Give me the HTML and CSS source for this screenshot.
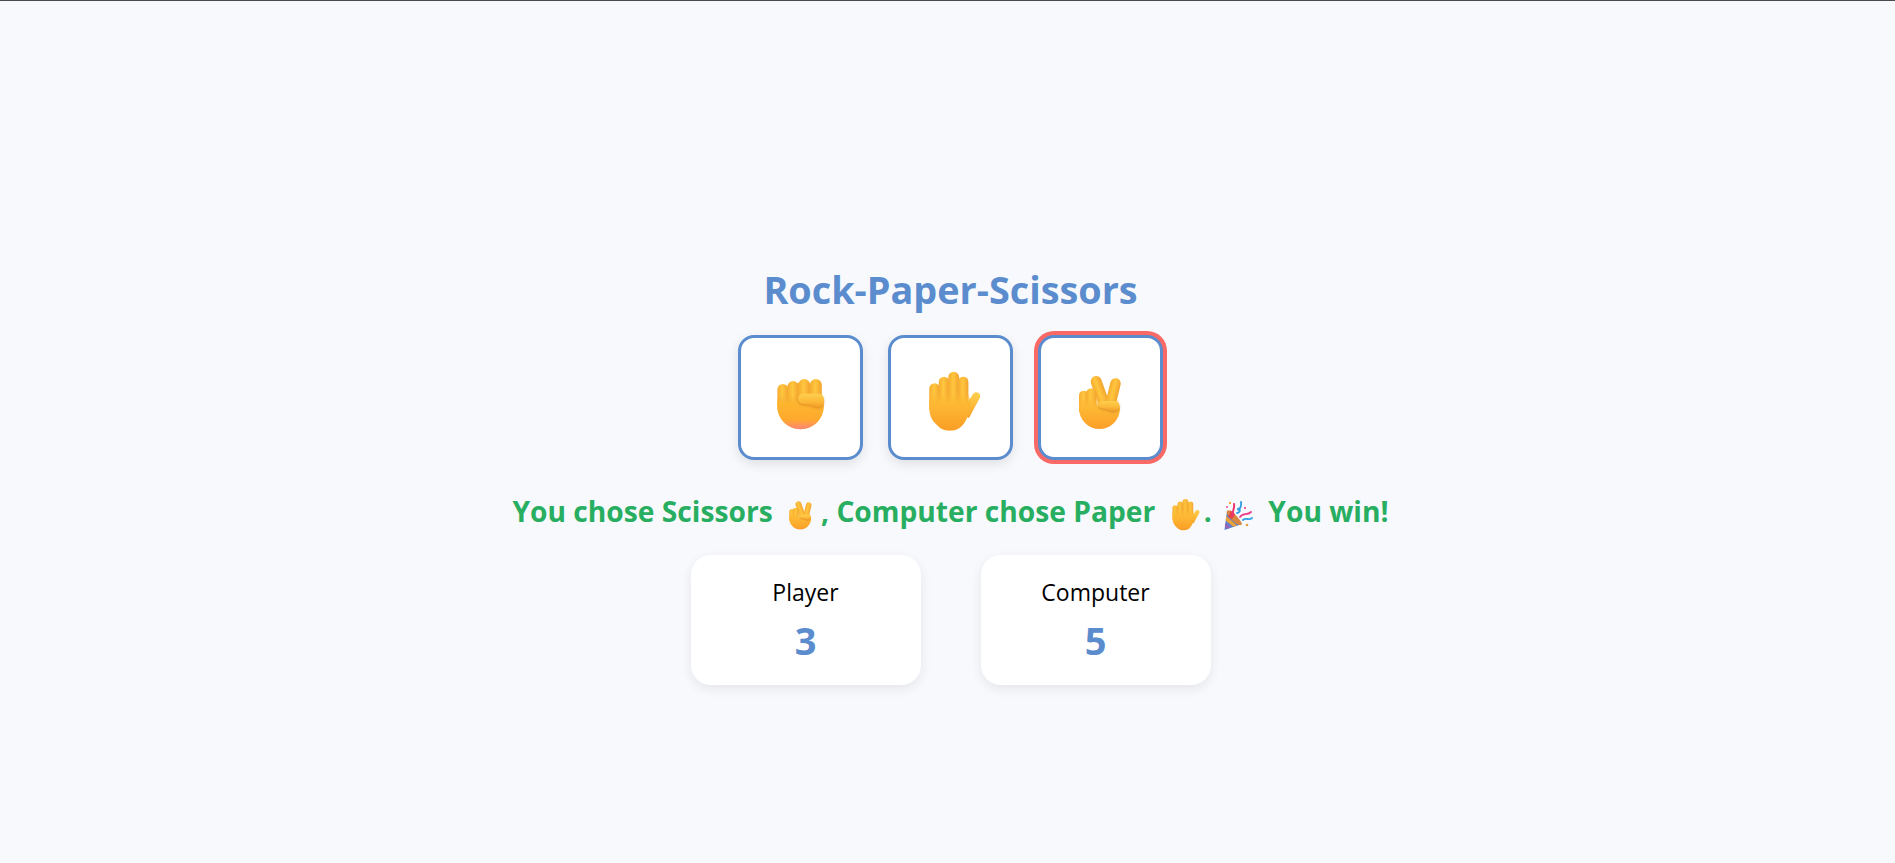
FILE: index.html
```html
<!DOCTYPE html>
<html lang="en">
<head>
<meta charset="utf-8">
<title>Rock-Paper-Scissors</title>
<link rel="stylesheet" href="styles.css">
</head>
<body>
<main class="game">
  <h1 class="title">Rock-Paper-Scissors</h1>
  <div class="choices">
    <button class="choice" aria-label="Rock"><svg class="emoji-lg" viewBox="0 0 64 64"><use href="#fist"/></svg></button>
    <button class="choice" aria-label="Paper"><svg class="emoji-lg" viewBox="0 0 64 64"><use href="#hand"/></svg></button>
    <button class="choice selected" aria-label="Scissors"><svg class="emoji-lg" viewBox="0 0 64 64"><use href="#victory"/></svg></button>
  </div>
  <p class="status">You chose Scissors <svg class="emoji-sm" viewBox="0 0 64 64"><use href="#victory"/></svg>, Computer chose Paper <svg class="emoji-sm emoji-hand" viewBox="0 0 64 64"><use href="#hand"/></svg>. <svg class="emoji-party" viewBox="0 0 30 30"><use href="#party"/></svg> You win!</p>
  <div class="scores">
    <div class="score-card"><div class="score-name">Player</div><div class="score-value">3</div></div>
    <div class="score-card"><div class="score-name">Computer</div><div class="score-value">5</div></div>
  </div>
</main>
<svg class="defs" width="0" height="0" aria-hidden="true">
  <defs>
    <linearGradient id="cylB" x1="0" y1="0" x2="1" y2="0"><stop offset="0" stop-color="#f6ab2f"/><stop offset=".45" stop-color="#ffc63f"/><stop offset="1" stop-color="#f3a32d"/></linearGradient>
    <linearGradient id="fistPalm" gradientUnits="userSpaceOnUse" x1="0" y1="28" x2="0" y2="61"><stop offset="0" stop-color="#f6aa30" stop-opacity="0"/><stop offset=".22" stop-color="#fdb52f"/><stop offset=".72" stop-color="#ffa92e"/><stop offset="1" stop-color="#ff8577"/></linearGradient>
    <linearGradient id="thumb" x1="0" y1="0" x2="0" y2="1"><stop offset="0" stop-color="#fdcf4e"/><stop offset=".6" stop-color="#fdb838"/><stop offset="1" stop-color="#f39f2b"/></linearGradient>
    <linearGradient id="handPalm" gradientUnits="userSpaceOnUse" x1="0" y1="24" x2="0" y2="63"><stop offset="0" stop-color="#fdb934" stop-opacity="0"/><stop offset=".3" stop-color="#fdb934"/><stop offset="1" stop-color="#fb9d26"/></linearGradient>
    <linearGradient id="vicPalm" gradientUnits="userSpaceOnUse" x1="0" y1="30" x2="0" y2="61"><stop offset="0" stop-color="#fdb934" stop-opacity="0"/><stop offset=".3" stop-color="#fdb934"/><stop offset="1" stop-color="#fb9f28"/></linearGradient>
    <filter id="soft" filterUnits="userSpaceOnUse" x="0" y="0" width="64" height="64"><feGaussianBlur stdDeviation=".35"/></filter>
    <filter id="lift" x="-20%" y="-30%" width="140%" height="170%"><feDropShadow dx="0" dy="1.200" stdDeviation="1.100" flood-color="#c9741a" flood-opacity=".6"/></filter>

    <symbol id="fist" viewBox="0 0 64 64">
      <g filter="url(#soft)">
        <circle cx="32.500" cy="38" r="23.200" fill="#fdb52f"/>
        <rect x="9.400" y="16" width="11" height="26" rx="5.500" fill="url(#cylB)"/>
        <rect x="19.400" y="13" width="11.400" height="26" rx="5.700" fill="url(#cylB)"/>
        <rect x="30.200" y="11" width="12" height="28" rx="6" fill="url(#cylB)"/>
        <rect x="41.800" y="11" width="12" height="28" rx="6" fill="url(#cylB)"/>
        <path d="M9.300 38 A23.200 23.200 0 1 0 55.700 38 V29 H9.300Z" fill="url(#fistPalm)"/>
        <path d="M36 25.500h14c4 0 6 3 6 7 0 4-2 6.500-6 6.500-5 0-6-3-14-3-4 0-6-2.200-6-5.300s2-5.200 6-5.200z" fill="url(#thumb)" filter="url(#lift)"/>
      </g>
    </symbol>

    <symbol id="hand" viewBox="0 0 64 64">
      <g filter="url(#soft)">
        <path d="M47 37 L54 26 C56.500 22 63.500 25.500 60.500 30.500 L50 50 L42 46Z" fill="url(#thumb)"/>
        <rect x="10.300" y="15.300" width="10.600" height="30" rx="5.300" fill="url(#cylB)"/>
        <rect x="19.800" y="8.700" width="10.400" height="34" rx="5.200" fill="url(#cylB)"/>
        <rect x="29.300" y="3.700" width="10.800" height="38" rx="5.400" fill="url(#cylB)"/>
        <rect x="39.200" y="8.700" width="10.200" height="34" rx="5.100" fill="url(#cylB)"/>
        <path d="M10.300 24 V40 C10.500 47 12.500 52 17 56 C22 62 27 63 33 62.600 C40 62 44 58 47 52 L53 40 L49.400 24Z" fill="url(#handPalm)"/>
      </g>
    </symbol>

    <symbol id="victory" viewBox="0 0 64 64">
      <g filter="url(#soft)">
        <rect x="30.500" y="6.500" width="11" height="37" rx="5.500" fill="url(#cylB)" transform="rotate(-19.800 36 38)"/>
        <rect x="35.750" y="9.550" width="10.500" height="34" rx="5.250" fill="url(#cylB)" transform="rotate(13.700 41 38)"/>
        <rect x="10" y="22.700" width="9.600" height="24" rx="4.800" fill="url(#cylB)"/>
        <rect x="17" y="20.300" width="10.600" height="24" rx="5.300" fill="url(#cylB)"/>
        <path d="M10 30 V40.500 A20.500 20.500 0 0 0 51 40.500 L49 30Z" fill="url(#vicPalm)"/>
        <path d="M34 33h10c4 0 6.500 2 6.500 5s-2.500 5-6.500 5c-4 0-5-2-10-2.500-3-.3-4.500-2-4.500-4s1.500-3.500 4.500-3.500z" fill="url(#thumb)" filter="url(#lift)"/>
      </g>
    </symbol>

    <symbol id="party" viewBox="0 0 30 30">
      <path d="M1.500 29 L4 10 L19 23 Z" fill="#5c7fd0"/>
      <path d="M3.300 15 L14 24.600 L10.400 25.700 L2.600 19.500 Z" fill="#e9a23a"/>
      <path d="M2.300 22 L7.300 26.600 L4 27.800 L1.900 25.500 Z" fill="#9a63b5"/>
      <path d="M4 10 C6 6 17 17 19 23 C17 26 12 22 9 19 C6 16 3 13 4 10Z" fill="#d9873c"/>
      <path d="M5 15 C7 13 8 11 7 9 L12 13 C11 16 9 18 8 18Z" fill="#e8404f"/>
      <path d="M9 14 C8 10 11 7 10 3" fill="none" stroke="#f0346f" stroke-width="2" stroke-linecap="round" transform="translate(1 0)"/>
      <path d="M14 12 C19 11 16 6 15 8 C14 10 19 8 18 1" fill="none" stroke="#2d9be0" stroke-width="1.800" stroke-linecap="round"/>
      <path d="M17 16 C20 11 24 15 28 11" fill="none" stroke="#ee3c8a" stroke-width="1.800" stroke-linecap="round"/>
      <path d="M20 19 C23 16 26 20 29 17" fill="none" stroke="#35a4e6" stroke-width="1.800" stroke-linecap="round"/>
      <circle cx="7" cy="2" r="1.200" fill="#f3a93c"/><circle cx="22" cy="7" r="1.100" fill="#ee3c8a"/><circle cx="24" cy="24" r="1.300" fill="#e9a23a"/><circle cx="4" cy="6" r=".9" fill="#ee3c8a"/>
    </symbol>
  </defs>
</svg>
</body>
</html>
```
FILE: styles.css
```css
* { box-sizing: border-box; }

html, body { margin: 0; height: 100%; }

body {
  background: #f7f9fd;
  border-top: 1px solid #4a4a4a;
  font-family: "Open Sans", "Noto Sans", sans-serif;
  overflow: hidden;
}

.game {
  display: flex;
  flex-direction: column;
  align-items: center;
  padding: 262px 0 0 6px;
}

.title {
  margin: 0;
  font-size: 37.8px;
  line-height: 53px;
  font-weight: 700;
  color: #5b8ccd;
}

.choices {
  display: flex;
  gap: 25.6px;
  margin-top: 19px;
}

.choice {
  display: flex;
  align-items: center;
  justify-content: center;
  width: 124.6px;
  height: 124.6px;
  padding: 6px 0 0;
  background: #fff;
  border: 3px solid #5b8ccd;
  border-radius: 16px;
  box-shadow: 0 4px 12px rgba(0, 0, 0, .1);
}

.choice.selected {
  box-shadow: 0 0 0 4px #f96a66;
}

.emoji-lg { width: 64px; height: 64px; flex: none; }

.status {
  margin: 33.4px 0 0;
  font-size: 28.2px;
  line-height: 36px;
  font-weight: 700;
  color: #27ae60;
  white-space: nowrap;
}

.emoji-sm, .emoji-party { vertical-align: -9px; }
.emoji-sm { width: 34px; height: 34px; margin: 0 3px 0 4px; }
.emoji-hand { margin-right: 3px; }
.emoji-party { width: 30px; height: 30px; margin: 0 8px 0 4px; }

.scores {
  display: flex;
  gap: 60px;
  margin-top: 24px;
}

.score-card {
  width: 230px;
  height: 130px;
  padding-top: 21px;
  background: #fff;
  border-radius: 20px;
  text-align: center;
  box-shadow: 0 4px 12px rgba(0, 0, 0, .08);
}

.score-name {
  font-size: 23px;
  line-height: 32px;
  color: #000;
}

.score-value {
  margin-top: 9px;
  font-size: 38px;
  line-height: 46px;
  font-weight: 700;
  color: #5b8ccd;
}

.defs { display: block; }
```
